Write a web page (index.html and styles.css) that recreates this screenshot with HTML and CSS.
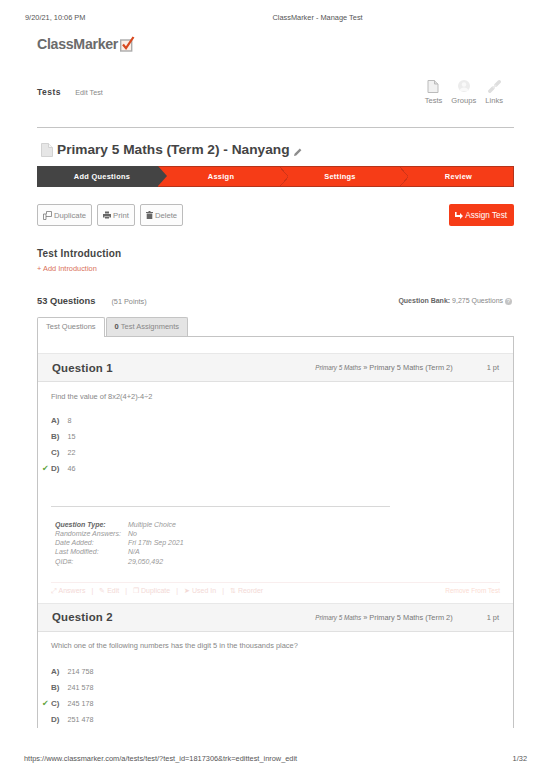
FILE: index.html
```html
<!DOCTYPE html>
<html lang="en">
<head>
    <meta charset="UTF-8">
    <title>ClassMarker - Manage Test</title>
    <link rel="stylesheet" href="styles.css">
</head>
<body>
    <div class="print-head">
        <span>9/20/21, 10:06 PM</span>
        <span class="print-title">ClassMarker - Manage Test</span>
    </div>

    <div class="page">
        <div class="logo">
            <span>ClassMarker</span>
            <svg width="16" height="16" viewBox="0 0 16 16">
                <rect x="1.7" y="4" width="11" height="11" fill="#fbeee6" stroke="#ababab" stroke-width="1.4"/>
                <path d="M4 8.5 L7 12.2 L14.5 1" fill="none" stroke="#d8481f" stroke-width="2.2"/>
            </svg>
        </div>

        <div class="top-nav">
            <div class="crumbs">
                <b>Tests</b>
                <span>Edit Test</span>
            </div>
            <div class="top-links">
                <div class="top-link">
                    <svg width="12" height="13" viewBox="0 0 12 13">
                        <path d="M1 .5 H7.5 L11 4 V12.5 H1 Z" fill="#f1f1f1" stroke="#bbb"/>
                        <path d="M7.5 .5 V4 H11" fill="#ddd" stroke="#bbb"/>
                    </svg>
                    <span>Tests</span>
                </div>
                <div class="top-link">
                    <svg width="14" height="13" viewBox="0 0 14 13">
                        <circle cx="7" cy="6" r="6" fill="#ececec"/>
                        <circle cx="7" cy="4.5" r="2.2" fill="#f9f9f9"/>
                        <path d="M2.5 11 C3 8.5 5 7.6 7 7.6 C9 7.6 11 8.5 11.5 11 Z" fill="#f9f9f9"/>
                    </svg>
                    <span>Groups</span>
                </div>
                <div class="top-link">
                    <svg width="13" height="13" viewBox="0 0 13 13">
                        <path d="M1.8 11.2 L5 8 M8 5 L11.2 1.8" stroke="#dedede" stroke-width="3.4" stroke-linecap="round"/>
                        <path d="M5 8 L8 5" stroke="#e9e9e9" stroke-width="1.6"/>
                    </svg>
                    <span>Links</span>
                </div>
            </div>
        </div>

        <h1 class="test-title">
            <svg width="12" height="14" viewBox="0 0 12 14">
                <path d="M.5 .5 H7.5 L11.5 4.5 V13.5 H.5 Z" fill="#e6e6e6" stroke="#d2d2d2"/>
                <path d="M7.5 .5 V4.5 H11.5" fill="#f7f7f7" stroke="#d2d2d2"/>
            </svg>
            Primary 5 Maths (Term 2) - Nanyang
            <svg class="title-edit" width="8" height="8" viewBox="0 0 8 8">
                <path d="M0 8 L.6 5.8 L5.8 .6 L7.4 2.2 L2.2 7.4 Z" fill="#8c8c8c"/>
            </svg>
        </h1>

        <div class="steps">
            <div class="step step-active">Add Questions</div>
            <div class="step step-assign">Assign</div>
            <div class="step step-settings">Settings</div>
            <div class="step step-review">Review</div>
        </div>

        <div class="actions">
            <a class="btn">
                <svg width="9" height="9" viewBox="0 0 9 9"><path d="M.5 3 H3 V8.5 H.5 Z M3 5.5 H8.5 V.5 H3.5 V3" fill="none" stroke="#777" stroke-width=".8"/></svg>
                Duplicate
            </a>
            <a class="btn">
                <svg width="8" height="8" viewBox="0 0 8 8"><path d="M2 .5 H6 V2.5 H2 Z M0 3 H8 V6.5 H6.4 V5 H1.6 V6.5 H0 Z M2 5.6 H6 V7.5 H2 Z" fill="#666"/></svg>
                Print
            </a>
            <a class="btn">
                <svg width="7" height="8" viewBox="0 0 7 8"><path d="M2.5 0 H4.5 V1 H7 V2 H0 V1 H2.5 Z M.7 2.5 H6.3 V8 H.7 Z" fill="#666"/></svg>
                Delete
            </a>
            <a class="btn-assign">
                <svg width="8" height="7" viewBox="0 0 8 7"><path d="M0 0 H1.6 V3 H5 V1 L8 4 L5 7 V5 H0 Z" fill="#fff"/></svg>
                Assign Test
            </a>
        </div>

        <h2 class="intro-title">Test Introduction</h2>
        <a class="add-intro">+ Add Introduction</a>

        <div class="count-row">
            <b class="q-count">53 Questions</b>
            <span class="points">(51 Points)</span>
            <span class="bank"><b>Question Bank:</b> 9,275 Questions <i class="help">?</i></span>
        </div>

        <div class="tabs">
            <div class="tab tab-active">Test Questions</div>
            <div class="tab"><b>0</b> Test Assignments</div>
        </div>

        <div class="panel">
            <div class="q-head">
                <h3>Question 1</h3>
                <span class="q-cat"><i>Primary 5 Maths</i> » Primary 5 Maths (Term 2)</span>
                <span class="q-pts">1 pt</span>
            </div>
            <div class="q-body">
                <p class="q-text">Find the value of 8x2(4+2)-4÷2</p>
                <div class="answers">
                    <div class="answer"><b>A)</b><span>8</span></div>
                    <div class="answer"><b>B)</b><span>15</span></div>
                    <div class="answer"><b>C)</b><span>22</span></div>
                    <div class="answer correct"><b>D)</b><span>46</span></div>
                </div>
                <div class="meta">
                    <dl>
                        <dt><b>Question Type:</b></dt><dd>Multiple Choice</dd>
                        <dt>Randomize Answers:</dt><dd>No</dd>
                        <dt>Date Added:</dt><dd>Fri 17th Sep 2021</dd>
                        <dt>Last Modified:</dt><dd>N/A</dd>
                        <dt>QID#:</dt><dd>29,050,492</dd>
                    </dl>
                </div>
                <div class="q-tools">
                    <span>⤢ Answers</span><em>|</em>
                    <span>✎ Edit</span><em>|</em>
                    <span>❐ Duplicate</span><em>|</em>
                    <span>➤ Used In</span><em>|</em>
                    <span>⇅ Reorder</span>
                    <span class="remove">Remove From Test</span>
                </div>
            </div>

            <div class="q-head">
                <h3>Question 2</h3>
                <span class="q-cat"><i>Primary 5 Maths</i> » Primary 5 Maths (Term 2)</span>
                <span class="q-pts">1 pt</span>
            </div>
            <div class="q-body q-body-last">
                <p class="q-text">Which one of the following numbers has the digit 5 in the thousands place?</p>
                <div class="answers">
                    <div class="answer"><b>A)</b><span>214 758</span></div>
                    <div class="answer"><b>B)</b><span>241 578</span></div>
                    <div class="answer correct"><b>C)</b><span>245 178</span></div>
                    <div class="answer"><b>D)</b><span>251 478</span></div>
                </div>
            </div>
        </div>
    </div>

    <div class="print-foot">
        <span>https://www.classmarker.com/a/tests/test/?test_id=1817306&amp;trk=edittest_inrow_edit</span>
        <span>1/32</span>
    </div>
</body>
</html>
```

FILE: styles.css
```css
html, body {
    margin: 0;
    height: 777px;
    overflow: hidden;
    background: #fff;
}
body {
    font-family: "Liberation Sans", Arial, sans-serif;
    font-size: 8px;
    color: #888;
    display: flex;
    flex-direction: column;
}
.print-head {
    display: flex;
    height: 20px;
    padding: 13px 25px 0;
    color: #555;
    font-size: 7.4px;
    line-height: 10px;
}
.print-title {
    margin-left: 187px;
}
.page {
    flex: 1;
    min-height: 0;
    overflow: hidden;
    padding: 0 36px 0 37px;
}

.logo {
    display: flex;
    align-items: flex-end;
    height: 17px;
    margin-top: 3px;
    color: #6b6b6b;
    font-size: 14.2px;
    font-weight: bold;
    letter-spacing: -.3px;
    line-height: 17px;
}
.logo svg {
    margin: 0 0 1px 1px;
}

.top-nav {
    display: flex;
    justify-content: space-between;
    height: 33px;
    margin-top: 27px;
    padding-bottom: 14px;
    border-bottom: 1px solid #c4c4c4;
}
.crumbs {
    padding-top: 7px;
}
.crumbs b {
    color: #444;
    font-size: 8.5px;
    letter-spacing: .5px;
}
.crumbs span {
    margin-left: 12px;
    font-size: 7.2px;
}
.top-links {
    display: flex;
    gap: 9px;
    padding-right: 11px;
}
.top-link {
    display: flex;
    flex-direction: column;
    align-items: center;
    gap: 3px;
    font-size: 7.6px;
}

.test-title {
    display: flex;
    align-items: center;
    gap: 4px;
    margin: 10px 0 0 4px;
    height: 24px;
    color: #444;
    font-size: 13.7px;
    font-weight: bold;
    line-height: 24px;
}
.title-edit {
    margin-top: 3px;
}

.steps {
    display: flex;
    height: 21px;
    margin-top: 4px;
    background: #f63c17;
    border: 1px solid #b5331a;
    border-left: 0;
    box-sizing: border-box;
    color: #fff;
    font-size: 7.4px;
    font-weight: bold;
    letter-spacing: .3px;
    line-height: 19px;
    text-align: center;
}
.step {
    position: relative;
    box-sizing: border-box;
}
.step-active {
    flex: 0 0 121px;
    background: #444;
    padding-left: 9px;
    margin: -1px 0;
    line-height: 21px;
}
.step-active::after {
    content: "";
    position: absolute;
    left: 100%;
    top: 0;
    border-left: 9px solid #444;
    border-top: 10.5px solid transparent;
    border-bottom: 10.5px solid transparent;
}
.step-assign {
    flex: 0 0 122px;
    padding-left: 4px;
}
.step-settings {
    flex: 0 0 120px;
}
.step-review {
    flex: 1;
    padding-left: 4px;
}
.step-settings::before, .step-review::before {
    content: "";
    position: absolute;
    left: 0;
    top: 0;
    width: 8px;
    height: 19px;
    background: linear-gradient(to bottom left, transparent 46%, #cf3418 46%, #cf3418 54%, transparent 54%) top / 100% 50% no-repeat,
        linear-gradient(to top left, transparent 46%, #cf3418 46%, #cf3418 54%, transparent 54%) bottom / 100% 50% no-repeat;
}

.actions {
    display: flex;
    gap: 5px;
    margin-top: 17px;
    height: 22px;
}
.btn, .btn-assign {
    display: flex;
    align-items: center;
    gap: 2px;
    box-sizing: border-box;
    height: 22px;
    border-radius: 2px;
    font-size: 7.7px;
}
.btn {
    padding: 0 5px;
    border: 1.5px solid #bcbcbc;
    background: #fcfcfc;
    color: #8a8a8a;
}
.btn-assign {
    margin-left: auto;
    padding: 0 7px 0 6px;
    background: #f63c17;
    color: #fff;
    font-size: 8.2px;
}

.intro-title {
    margin: 21px 0 0;
    color: #444;
    font-size: 10px;
    line-height: 14px;
    letter-spacing: .2px;
}
.add-intro {
    display: block;
    margin-top: 3px;
    color: #d9715a;
    font-size: 7.4px;
    line-height: 10px;
}

.count-row {
    display: flex;
    align-items: center;
    height: 14px;
    margin-top: 20px;
}
.q-count {
    color: #444;
    font-size: 9.3px;
}
.points {
    margin-left: 16px;
    font-size: 7.3px;
}
.bank {
    margin-left: auto;
    padding-right: 2px;
    font-size: 7px;
}
.bank b {
    color: #666;
}
.help {
    display: inline-block;
    width: 7px;
    height: 7px;
    border-radius: 50%;
    background: #c4c4c4;
    color: #fff;
    font-size: 6px;
    font-style: normal;
    line-height: 7px;
    text-align: center;
}

.tabs {
    display: flex;
    gap: 1px;
    margin-top: 9px;
    height: 19px;
    position: relative;
    z-index: 1;
}
.tab {
    box-sizing: border-box;
    height: 19px;
    padding: 0 8px;
    border: 1px solid #c4c4c4;
    border-bottom: 0;
    border-radius: 2px 2px 0 0;
    background: #e4e4e4;
    font-size: 7.5px;
    line-height: 18px;
}
.tab b {
    color: #555;
}
.tab-active {
    height: 20px;
    background: #fff;
}

.panel {
    padding-top: 16px;
    border: 1px solid #c4c4c4;
    border-bottom: 0;
}
.q-head {
    display: flex;
    align-items: center;
    height: 27px;
    padding: 0 14px;
    background: #f5f5f5;
    border-top: 1px solid #e8e8e8;
    border-bottom: 1px solid #e0e0e0;
}
.q-head h3 {
    margin: 0;
    color: #444;
    font-size: 11.4px;
    letter-spacing: .2px;
}
.q-cat {
    margin-left: auto;
    color: #777;
    font-size: 7.4px;
}
.q-cat i {
    font-size: 6.3px;
}
.q-pts {
    margin-left: 34px;
    font-size: 7.4px;
    color: #777;
}

.q-body {
    padding: 10px 13px 0;
}
.q-body-last {
    padding-top: 9px;
}
.q-text {
    margin: 0;
    font-size: 7.45px;
    line-height: 10px;
}
.answers {
    margin-top: 11px;
}
.q-body-last .answers {
    margin-top: 13px;
}
.answer {
    position: relative;
    display: flex;
    gap: 8px;
    height: 16px;
    line-height: 16px;
    font-size: 7.2px;
}
.answer b {
    color: #666;
    font-size: 8px;
}
.correct::before {
    content: "✔";
    position: absolute;
    left: -9px;
    color: #62a33d;
    font-family: "DejaVu Sans", sans-serif;
    font-size: 8px;
}

.meta {
    width: 339px;
    margin-top: 29px;
    padding-top: 12.5px;
    border-top: 1px solid #d8d8d8;
}
.meta dl {
    display: grid;
    grid-template-columns: 73px 1fr;
    margin: 0 0 0 4px;
    font-size: 7px;
    font-style: italic;
    line-height: 9.3px;
    color: #999;
}
.meta dt b {
    color: #666;
}
.meta dd {
    margin: 0;
}

.q-tools {
    display: flex;
    gap: 6px;
    height: 20px;
    margin: 16px 0 0;
    border-top: 1px solid #f9eeee;
    color: #f3d9d6;
    font-size: 7px;
    line-height: 15px;
}
.q-tools em {
    font-style: normal;
}
.remove {
    margin-left: auto;
    color: #fbdcd3;
    font-size: 6.5px;
}

.print-foot {
    display: flex;
    justify-content: space-between;
    height: 27px;
    padding: 4px 23px 0 24px;
    box-sizing: border-box;
    background: #fff;
    color: #555;
    font-size: 7.4px;
    line-height: 10px;
}
```
